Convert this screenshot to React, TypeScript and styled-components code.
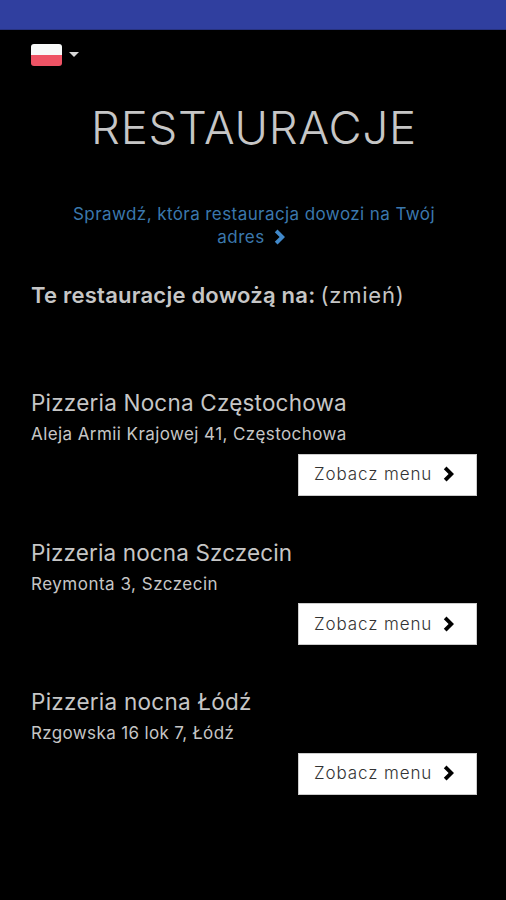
import React from "react";
import styled, { createGlobalStyle } from "styled-components";

const GlobalStyle = createGlobalStyle`
  * { box-sizing: border-box; }
  html, body { margin: 0; background: #000; }
  body { font-family: Inter, "Open Sans", sans-serif; color: #c6c6c6; }
`;

const Page = styled.div`
  display: flex;
  flex-direction: column;
  width: 506px;
  height: 900px;
  background: #000;
  overflow: hidden;
`;

const StatusBar = styled.div`
  height: 30px;
  flex: none;
  background: #303f9f;
  border-bottom: 1px solid #283380;
`;

const Content = styled.main`
  display: flex;
  flex-direction: column;
  padding: 14px 29px 0 31px;
`;

const LanguageButton = styled.button`
  display: flex;
  align-items: center;
  gap: 7px;
  align-self: flex-start;
  height: 22px;
  padding: 0;
  border: 0;
  background: none;
`;

const Flag = styled.span`
  width: 31px;
  height: 22px;
  border-radius: 3px;
  background: linear-gradient(#f8fafa 0 50%, #ee5365 50% 100%);
`;

const Caret = styled.span`
  margin-top: -1px;
  border: 5px solid transparent;
  border-top-color: #d8d8d8;
  border-bottom: 0;
`;

const Title = styled.h1<{ $spacing: number }>`
  margin: 32px 0 0;
  height: 60px;
  line-height: 60px;
  font-size: 45.5px;
  font-weight: 300;
  text-align: center;
  white-space: nowrap;
  letter-spacing: ${(p) => p.$spacing}px;
`;

const AddressLink = styled.a`
  display: flex;
  flex-direction: column;
  align-items: center;
  margin-top: 45px;
  color: #3b78ad;
  font-size: 17px;
  line-height: 23px;
`;

const LinkLine = styled.span<{ $spacing: number }>`
  display: flex;
  align-items: center;
  gap: 9px;
  white-space: nowrap;
  letter-spacing: ${(p) => p.$spacing}px;
`;

const Delivery = styled.p`
  display: flex;
  gap: 5px;
  margin: 31px 0 0;
  font-size: 22px;
  line-height: 30px;
  white-space: nowrap;
`;

const Phrase = styled.span<{ $weight: number; $spacing: number }>`
  font-weight: ${(p) => p.$weight};
  letter-spacing: ${(p) => p.$spacing}px;
`;

const List = styled.div`
  display: flex;
  flex-direction: column;
  margin-top: 78px;
`;

const Restaurant = styled.article`
  display: flex;
  flex-direction: column;
  height: 149.5px;
`;

const Name = styled.h2<{ $spacing: number }>`
  margin: 0;
  height: 30px;
  line-height: 30px;
  font-size: 22.5px;
  font-weight: 400;
  white-space: nowrap;
  letter-spacing: ${(p) => p.$spacing}px;
`;

const Address = styled.p<{ $spacing: number }>`
  margin: 4px 0 0;
  height: 24px;
  line-height: 24px;
  font-size: 17px;
  font-weight: 400;
  white-space: nowrap;
  letter-spacing: ${(p) => p.$spacing}px;
`;

const MenuButton = styled.button`
  display: flex;
  align-items: center;
  justify-content: space-between;
  align-self: flex-end;
  width: 179px;
  height: 42px;
  margin-top: 7.9px;
  padding: 0 21px 1px 15px;
  border: 1px solid #ccc;
  background: #fff;
  color: #333;
  font-family: inherit;
  font-size: 17px;
  font-weight: 300;
  white-space: nowrap;
`;

const ButtonLabel = styled.span`
  letter-spacing: 0.9px;
`;

const ChevronIcon = styled.svg`
  flex: none;
  width: 12px;
  height: 16px;
  fill: currentColor;
`;

const LinkChevron = styled(ChevronIcon)`
  margin: 0 5px 2px 0;
  color: #4189ca;
`;

const MenuChevron = styled(ChevronIcon)`
  color: #000;
`;

const chevronPath = "M3.5 0.5 L11 8 L3.5 15.5 L0.8 12.8 L5.6 8 L0.8 3.2 Z";

const restaurants = [
  { name: "Pizzeria Nocna Częstochowa", address: "Aleja Armii Krajowej 41, Częstochowa", nameSpacing: 0.2, addressSpacing: 0.42 },
  { name: "Pizzeria nocna Szczecin", address: "Reymonta 3, Szczecin", nameSpacing: 0.12, addressSpacing: 0.5 },
  { name: "Pizzeria nocna Łódź", address: "Rzgowska 16 lok 7, Łódź", nameSpacing: 0.26, addressSpacing: 0.36 },
];

export default function App() {
  return (
    <Page>
      <GlobalStyle />
      <StatusBar />
      <Content>
        <LanguageButton aria-label="Polski">
          <Flag />
          <Caret />
        </LanguageButton>
        <Title $spacing={0.8}>RESTAURACJE</Title>
        <AddressLink>
          <LinkLine $spacing={0.42}>Sprawdź, która restauracja dowozi na Twój</LinkLine>
          <LinkLine $spacing={0.5}>
            adres
            <LinkChevron viewBox="0 0 12 16"><path d={chevronPath} /></LinkChevron>
          </LinkLine>
        </AddressLink>
        <Delivery>
          <Phrase $weight={600} $spacing={0.23}>Te restauracje dowożą na:</Phrase>
          <Phrase $weight={400} $spacing={0.8}>(zmień)</Phrase>
        </Delivery>
        <List>
          {restaurants.map((r) => (
            <Restaurant key={r.name}>
              <Name $spacing={r.nameSpacing}>{r.name}</Name>
              <Address $spacing={r.addressSpacing}>{r.address}</Address>
              <MenuButton>
                <ButtonLabel>Zobacz menu</ButtonLabel>
                <MenuChevron viewBox="0 0 12 16"><path d={chevronPath} /></MenuChevron>
              </MenuButton>
            </Restaurant>
          ))}
        </List>
      </Content>
    </Page>
  );
}
